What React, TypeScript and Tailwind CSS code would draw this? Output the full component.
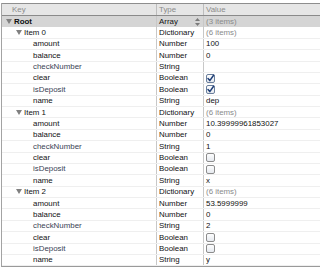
import React from "react";

type Row = {
  key: string;
  level: 0 | 1 | 2;
  type: string;
  value?: string;
  muted?: boolean;
  check?: boolean;
  bluish?: boolean;
  selected?: boolean;
  stepper?: boolean;
};

const items = [
  { amount: "100", balance: "0", checkNumber: "", clear: true, isDeposit: true, name: "dep" },
  { amount: "10.39999961853027", balance: "0", checkNumber: "1", clear: false, isDeposit: false, name: "x" },
  { amount: "53.5999999", balance: "0", checkNumber: "2", clear: false, isDeposit: false, name: "y" },
];

const rows: Row[] = [
  { key: "Root", level: 0, type: "Array", value: "(3 items)", muted: true, selected: true, stepper: true },
];
items.forEach((it, i) => {
  rows.push({ key: `Item ${i}`, level: 1, type: "Dictionary", value: "(6 items)", muted: true });
  rows.push({ key: "amount", level: 2, type: "Number", value: it.amount });
  rows.push({ key: "balance", level: 2, type: "Number", value: it.balance });
  rows.push({ key: "checkNumber", level: 2, type: "String", value: it.checkNumber, bluish: true });
  rows.push({ key: "clear", level: 2, type: "Boolean", check: it.clear });
  rows.push({ key: "isDeposit", level: 2, type: "Boolean", check: it.isDeposit, bluish: true });
  rows.push({ key: "name", level: 2, type: "String", value: it.name });
});

function Triangle() {
  return (
    <svg width="6" height="5" viewBox="0 0 6 5" className="shrink-0">
      <polygon points="0,0 6,0 3,5" fill="#808080" />
    </svg>
  );
}

function Checkbox({ checked }: { checked: boolean }) {
  return (
    <svg width="9" height="9" viewBox="0 0 9 9">
      <defs>
        <linearGradient id="cbg" x1="0" y1="0" x2="0" y2="1">
          <stop offset="0" stopColor="#ffffff" />
          <stop offset="1" stopColor="#e4e8ee" />
        </linearGradient>
      </defs>
      <rect x="0.5" y="0.5" width="8" height="8" rx="1.5" fill="url(#cbg)" stroke={checked ? "#6b7f9c" : "#8c8c8c"} />
      {checked && (
        <path d="M2 4.6 L3.8 6.6 L7.6 1.2" fill="none" stroke="#1f3f77" strokeWidth="1.5" strokeLinecap="round" strokeLinejoin="round" />
      )}
    </svg>
  );
}

function Stepper() {
  return (
    <svg width="5" height="8" viewBox="0 0 5 8" className="shrink-0">
      <polygon points="2.5,0 5,3 0,3" fill="#7a7a7a" />
      <polygon points="0,5 5,5 2.5,8" fill="#7a7a7a" />
    </svg>
  );
}

export default function App() {
  return (
    <div
      className="w-[320px] h-[276px] bg-white overflow-hidden text-[7.9px] text-[#111111]"
      style={{ fontFamily: '"Liberation Sans", Arial, sans-serif' }}
    >
      <div className="h-[3px] bg-white" />
      <div className="ml-px border-l border-[#a3a3a3] border-b border-b-[#9a9a9a]">
        {/* Header */}
        <div className="flex h-[13px] border-t border-[#8e8e8e] border-b border-b-[#8a8a8a] bg-[#e6e6e6] text-[#8c8c8c] leading-[11px]">
          <div className="w-[155px] shrink-0 border-r border-[#bdbdbd] pl-[10px]">Key</div>
          <div className="w-[47px] shrink-0 border-r border-[#bdbdbd] pl-[2px]">Type</div>
          <div className="flex-1 pl-[2px]">Value</div>
        </div>
        {rows.map((r, idx) => (
          <div
            key={idx}
            className={`flex h-[11.38px] leading-[11.38px] ${r.selected ? "bg-[#d5d5d5]" : "bg-white border-b border-[#efefef]"}`}
          >
            <div
              className={`w-[155px] shrink-0 border-r border-[#c8c8c8] flex items-center gap-[2px] ${
                r.level === 0 ? "pl-[4px]" : r.level === 1 ? "pl-[14px]" : "pl-[31px]"
              }`}
            >
              {r.level < 2 && <Triangle />}
              <span className={r.level === 0 ? "font-bold" : r.bluish ? "text-[#3a4254]" : ""}>{r.key}</span>
            </div>
            <div className="w-[47px] shrink-0 border-r border-[#c8c8c8] pl-[2px] pr-[3px] flex items-center justify-between">
              <span>{r.type}</span>
              {r.stepper && <Stepper />}
            </div>
            <div className="flex-1 pl-[2px] flex items-center">
              {r.check !== undefined ? (
                <Checkbox checked={r.check} />
              ) : (
                <span className={r.muted ? "text-[#8a8a8a]" : ""}>{r.value}</span>
              )}
            </div>
          </div>
        ))}
      </div>
    </div>
  );
}
